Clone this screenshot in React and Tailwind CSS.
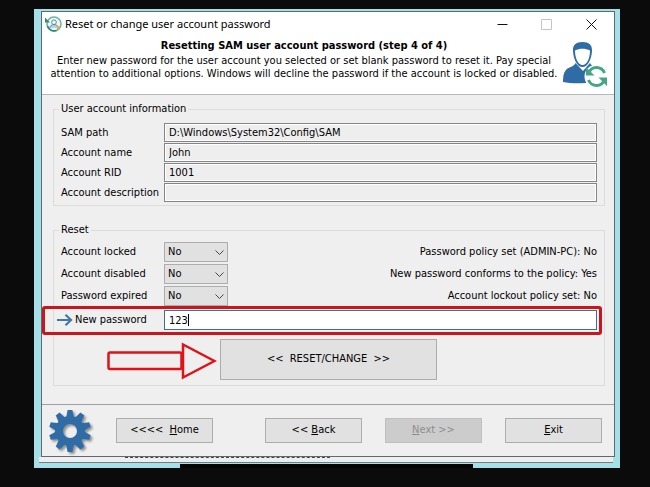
import { useState } from 'react';

const accountFields = [
  { id: 'sam-path', label: 'SAM path', value: 'D:\\Windows\\System32\\Config\\SAM' },
  { id: 'account-name', label: 'Account name', value: 'John' },
  { id: 'account-rid', label: 'Account RID', value: '1001' },
  { id: 'account-description', label: 'Account description', value: '' },
];

const resetOptions = [
  { id: 'locked', label: 'Account locked', policy: 'Password policy set (ADMIN-PC): No' },
  { id: 'disabled', label: 'Account disabled', policy: 'New password conforms to the policy: Yes' },
  { id: 'expired', label: 'Password expired', policy: 'Account lockout policy set: No' },
];

const gearTeeth = [0, 36, 72, 108, 144, 180, 216, 252, 288, 324];

const AppIcon = () => (
  <svg className="w-[17px] h-4 shrink-0" viewBox="0 0 17 16" fill="none">
    <circle cx="9" cy="8" r="7" fill="#eef6f4" stroke="#6fb3a3" strokeWidth="1.600" />
    <path d="M2.500 10a7 7 0 0 0 9 4.500" stroke="#2f8d75" strokeWidth="1.600" />
    <circle cx="9" cy="6.200" r="2.300" fill="#fff" stroke="#4a86b5" />
    <path d="M4.800 12c.6-2.600 2-3.400 4.200-3.400s3.600.8 4.200 3.400" fill="#b7d3e6" stroke="#4a86b5" />
    <path d="M0 1.500v5h5z" fill="#2f8d75" />
    <path d="M11.500 8.500l3.500 2.500-3 2.500z" fill="#f2a64a" />
  </svg>
);

const UserIcon = () => (
  <svg className="w-[46px] h-[46px] shrink-0" viewBox="0 0 46 46" fill="none">
    <path d="M1 40c0-8 1.600-12 5.500-14 3-1.500 6-2.500 7-5l7.500 8 7-8c1 2.500 3.500 3.500 6 4.500l-10 15.500c-8 .6-17 .4-23-1z" fill="#2f6ca6" />
    <path d="M20.500 0C14 0 10.500 3 11 9c.4 8 4 16 9.500 16S29.500 17 30 9c.4-6-3-9-9.500-9z" fill="#2f6ca6" />
    <path d="M13 8.500c4.500-2.500 10.500-2.500 15 0 0 7.500-3 14.500-7.500 14.500S13 16 13 8.500z" fill="#fff" />
    <circle cx="34.500" cy="34.500" r="12" fill="#fff" />
    <path d="M26.500 32c1-4 4-6.500 8-6.500 3.500 0 6.500 2 8 5.500" stroke="#44a783" strokeWidth="3" />
    <path d="M42.500 37c-1 4-4 6.500-8 6.500-3.500 0-6.500-2-8-5.500" stroke="#44a783" strokeWidth="3" />
    <path d="M24 25v8.500h8.500zM45 44v-8.500h-8.500z" fill="#44a783" />
  </svg>
);

const GearIcon = () => (
  <svg className="w-11 h-11 shrink-0 drop-shadow-[2px_2px_1px_#00000066]" viewBox="-22 -22 44 44" fill="#2f6ca6">
    {gearTeeth.map((angle) => (
      <path key={angle} d="M-4-13L-2.400-21h4.800L4-13z" transform={`rotate(${angle})`} />
    ))}
    <circle r="11" fill="none" stroke="#2f6ca6" strokeWidth="8" />
  </svg>
);

const Chevron = () => (
  <svg className="pointer-events-none absolute right-1 top-2 w-[9px] h-[5px]" viewBox="0 0 9 5" fill="none" stroke="#444">
    <path d="M.5.500l4 4 4-4" />
  </svg>
);

const GroupBox = ({ title, className, children }) => (
  <fieldset className={`min-w-0 border border-[#dcdcdc] px-[7px] ${className}`}>
    <legend className="-ml-0.5 px-0.5 leading-4">{title}</legend>
    {children}
  </fieldset>
);

const NavButton = ({ className = '', disabled, children }) => (
  <button
    type="button"
    disabled={disabled}
    className={`h-[25px] w-[97px] shrink-0 whitespace-pre border border-[#adadad] bg-[#e1e1e1] disabled:border-[#bfbfbf] disabled:bg-[#cccccc] disabled:text-[#8c8c8c] ${className}`}
  >
    {children}
  </button>
);

const App = () => {
  const [password, setPassword] = useState('123');

  return (
    <div className="min-h-screen bg-[#0b0b0b] pt-[9px] pr-[30px] pb-[18px] pl-[34px] text-[11px] text-black font-['DejaVu_Sans_Condensed','Liberation_Sans',sans-serif]">
      <div className="relative bg-[#a5dfe8] pt-0.5 pr-[5px] pb-[5px] pl-[7px]">
        <main className="border border-[#5c6b70] bg-[#efefef]">
          <div className="bg-white">
            <div className="flex h-6 items-center pl-[3px] pr-[17px]">
              <AppIcon />
              <h1 className="ml-[3px] flex-1 leading-4 font-['Noto_Sans',sans-serif]">
                Reset or change user account password
              </h1>
              <button type="button" aria-label="Minimize">
                <svg className="w-[11px] h-[11px]" viewBox="0 0 11 11" stroke="#111"><path d="M.5 5.500h10" /></svg>
              </button>
              <button type="button" aria-label="Maximize" disabled className="ml-[33px]">
                <svg className="w-[11px] h-[11px]" viewBox="0 0 11 11" fill="none" stroke="#c4c4c4"><path d="M.5.500h10v10H.5z" /></svg>
              </button>
              <button type="button" aria-label="Close" className="ml-[34px]">
                <svg className="w-[11px] h-[11px]" viewBox="0 0 11 11" stroke="#111"><path d="M.5.500l10 10M10.500.500l-10 10" /></svg>
              </button>
            </div>
            <div className="flex h-[59px] items-start border-b border-[#b8b8b8] pl-1 pr-[6px]">
              <div className="flex-1 pt-0.5 text-center">
                <h2 className="font-bold leading-4">Resetting SAM user account password (step 4 of 4)</h2>
                <p className="leading-[13px]">
                  Enter new password for the user account you selected or set blank password to reset it. Pay special
                  <br />
                  attention to additional options. Windows will decline the password if the account is locked or disabled.
                </p>
              </div>
              <div className="pt-[6px]">
                <UserIcon />
              </div>
            </div>
          </div>

          <div className="border-b border-[#a0a0a0] pt-[6px] pr-[9px] pb-[18px] pl-[11px]">
            <GroupBox title="User account information" className="pb-[3px]">
              <div className="grid grid-cols-[103px_1fr] gap-y-px pt-1.5">
                {accountFields.map((field) => (
                  <div key={field.id} className="contents">
                    <label htmlFor={field.id} className="leading-[19px]">{field.label}</label>
                    <input
                      id={field.id}
                      readOnly
                      value={field.value}
                      className="h-[19px] w-full min-w-0 border border-[#858585] bg-[#eeeeee] pl-1 shadow-[inset_0_0_0_1px_#fff] outline-none"
                    />
                  </div>
                ))}
              </div>
            </GroupBox>

            <GroupBox title="Reset" className="mt-4 pb-[5px]">
              <div className="grid grid-cols-[103px_64px_1fr] gap-y-0.5 pt-1">
                {resetOptions.map((option) => (
                  <div key={option.id} className="contents">
                    <label htmlFor={option.id} className="leading-5">{option.label}</label>
                    <div className="relative">
                      <select
                        id={option.id}
                        defaultValue="No"
                        className="block h-5 w-full appearance-none border border-[#adadad] bg-[#e1e1e1] pl-[3px] leading-4"
                      >
                        <option>No</option>
                        <option>Yes</option>
                      </select>
                      <Chevron />
                    </div>
                    <p className="text-right leading-5">{option.policy}</p>
                  </div>
                ))}
              </div>

              <div className="relative mt-1 grid grid-cols-[103px_1fr]">
                <label htmlFor="new-password" className="flex items-center">
                  <svg className="-ml-1 mr-0.5 w-4 h-3" viewBox="0 0 16 12" fill="none" stroke="#4377a8" strokeWidth="2.200">
                    <path d="M0 6h14M8.500.800L14 6 8.500 11.200" />
                  </svg>
                  New password
                </label>
                <div className="relative">
                  <input
                    id="new-password"
                    type="text"
                    value={password}
                    onChange={(e) => setPassword(e.target.value)}
                    className="block h-5 w-full min-w-0 border border-[#39719c] bg-white pl-1 outline-none"
                  />
                  <span className="absolute left-6 top-1 h-3 w-px bg-black" />
                </div>
                {/* highlight frame */}
                <div className="pointer-events-none absolute -left-[19px] -right-[5px] -top-1 -bottom-[5px] rounded-[3px] border-3 border-[#c9151b]" />
              </div>

              <div className="mt-[9px] flex items-start pl-[46px]">
                <svg className="mt-[3px] w-[110px] h-[38px] shrink-0" viewBox="0 0 110 38" fill="none" stroke="#e01218" strokeWidth="2.500">
                  <rect x="1.500" y="10.500" width="73" height="16.500" rx="1.500" />
                  <path d="M76 2.500v33L107.500 19z" />
                </svg>
                <button
                  type="button"
                  className="ml-[3px] h-[41px] w-[217px] whitespace-pre border border-[#adadad] bg-[#e1e1e1]"
                >
                  {'<<  RESET/CHANGE  >>'}
                </button>
              </div>
            </GroupBox>
          </div>

          <div className="flex h-[51px] items-center pl-[6px] pr-3">
            <GearIcon />
            <NavButton className="ml-6">{'<<<<  '}<u>H</u>ome</NavButton>
            <NavButton className="ml-auto">{'<< '}<u>B</u>ack</NavButton>
            <NavButton className="ml-[23px]" disabled><u>N</u>ext {'>>'}</NavButton>
            <NavButton className="ml-[23px]"><u>E</u>xit</NavButton>
          </div>
        </main>
        <div className="mr-0.5 -ml-0.5 h-[6px] border-b border-[#6f7f82] bg-[#eeeeee] pl-[86px]">
          <div className="w-[205px] border-t border-dashed border-[#444]" />
        </div>
        <div className="absolute bottom-0 left-[146px] right-[147px] h-1 bg-[#050505]" />
      </div>
    </div>
  );
};

export default App;
